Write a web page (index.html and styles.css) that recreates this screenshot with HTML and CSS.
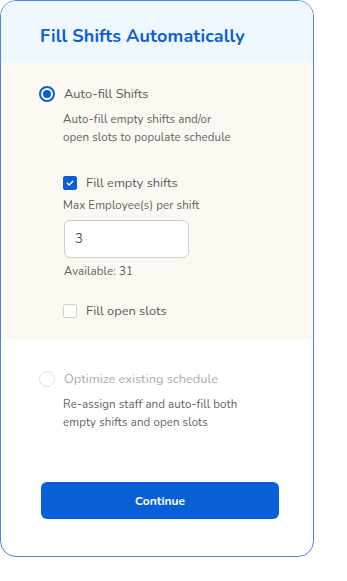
FILE: index.html
```html
<!DOCTYPE html>
<html lang="en">
<head>
    <meta charset="UTF-8">
    <meta name="viewport" content="width=device-width, initial-scale=1.0">
    <title>Fill Shifts Automatically</title>
    <link rel="stylesheet" href="styles.css">
</head>
<body>
    <div class="card">
        <div class="card-header">
            <h1>Fill Shifts Automatically</h1>
        </div>

        <div class="option option-active">
            <label class="radio-row">
                <span class="radio checked"></span>
                <span class="option-title">Auto-fill Shifts</span>
            </label>
            <p class="option-desc">Auto-fill empty shifts and/or<br>open slots to populate schedule</p>

            <div class="sub-options">
                <label class="check-row">
                    <span class="checkbox checked">
                        <svg width="10" height="10" viewBox="0 0 10 10"><path d="M2.3 5.2 L4.2 7 L7.8 3.2" fill="none" stroke="#fff" stroke-width="1.4" stroke-linecap="round" stroke-linejoin="round"/></svg>
                    </span>
                    <span class="check-label">Fill empty shifts</span>
                </label>
                <div class="field-label">Max Employee(s) per shift</div>
                <input type="text" class="num-input" value="3">
                <div class="field-hint">Available: 31</div>

                <label class="check-row open-slots">
                    <span class="checkbox"></span>
                    <span class="check-label">Fill open slots</span>
                </label>
            </div>
        </div>

        <div class="option option-disabled">
            <label class="radio-row">
                <span class="radio"></span>
                <span class="option-title">Optimize existing schedule</span>
            </label>
            <p class="option-desc">Re-assign staff and auto-fill both<br>empty shifts and open slots</p>
        </div>

        <div class="card-footer">
            <button class="btn-continue">Continue</button>
        </div>
    </div>
</body>
</html>
```

FILE: styles.css
```css
body {
    margin: 0;
    font-family: "Nunito", "Lato", "Open Sans", sans-serif;
    background: #fff;
}
.card {
    width: 314px;
    height: 557px;
    box-sizing: border-box;
    border: 1px solid #4a86de;
    border-radius: 16px;
    overflow: hidden;
    display: flex;
    flex-direction: column;
}
.card-header {
    height: 62px;
    background: #f0f8ff;
    border-bottom: 1px solid #f8fbff;
    padding-left: 39px;
    display: flex;
    align-items: center;
    box-sizing: border-box;
}
h1 {
    margin: 0;
    padding-top: 9px;
    font-size: 18px;
    font-weight: 700;
    color: #0b5fd5;
    letter-spacing: 0.1px;
}
.option {
    padding-left: 38px;
}
.option-active {
    background: #fdf9f2;
    height: 277px;
    box-sizing: border-box;
    padding-top: 22px;
}
.radio-row, .check-row {
    display: flex;
    align-items: center;
}
.radio {
    width: 16px;
    height: 16px;
    box-sizing: border-box;
    border-radius: 50%;
    border: 1.5px solid #e2e2e2;
    background: #fff;
    position: relative;
}
.radio.checked {
    border: 2px solid #0b5fd5;
}
.radio.checked::after {
    content: "";
    position: absolute;
    left: 2px;
    top: 2px;
    width: 8px;
    height: 8px;
    border-radius: 50%;
    background: #0b5fd5;
}
.option-title {
    margin-left: 9px;
    font-size: 12.8px;
    color: #5a5a5a;
}
.option-desc {
    margin: 7px 0 0 24px;
    font-size: 11.5px;
    letter-spacing: 0.1px;
    line-height: 18px;
    color: #5f5f5f;
}
.sub-options {
    padding-left: 24px;
    margin-top: 28px;
}
.checkbox {
    width: 14px;
    height: 14px;
    box-sizing: border-box;
    border-radius: 2px;
    border: 1.5px solid #cfcfcf;
    background: #fff;
    display: flex;
    align-items: center;
    justify-content: center;
}
.checkbox.checked {
    background: #0b5fd5;
    border-color: #0b5fd5;
}
.check-label {
    margin-left: 9px;
    font-size: 12.8px;
    color: #5a5a5a;
}
.field-label {
    margin-top: 5px;
    font-size: 11.5px;
    letter-spacing: 0.1px;
    color: #5f5f5f;
}
.num-input {
    display: block;
    margin-top: 7px;
    margin-left: 1px;
    width: 125px;
    height: 38px;
    box-sizing: border-box;
    border: 1px solid #cdcdcd;
    border-radius: 6px;
    padding: 0 10px;
    font-family: inherit;
    font-size: 13px;
    color: #555;
    background: #fff;
    outline: none;
}
.field-hint {
    margin-top: 5px;
    margin-left: 1px;
    font-size: 11.5px;
    letter-spacing: 0.1px;
    color: #5f5f5f;
}
.open-slots {
    margin-top: 23px;
}
.option-disabled {
    padding-top: 30px;
}
.option-disabled .option-title {
    color: #ababab;
}
.card-footer {
    margin-top: auto;
    padding: 0 34px 37px 40px;
}
.btn-continue {
    width: 100%;
    height: 37px;
    border: none;
    border-radius: 6px;
    background: #085fd6;
    color: #fff;
    font-family: inherit;
    font-size: 12px;
    font-weight: 700;
    cursor: pointer;
}
```
